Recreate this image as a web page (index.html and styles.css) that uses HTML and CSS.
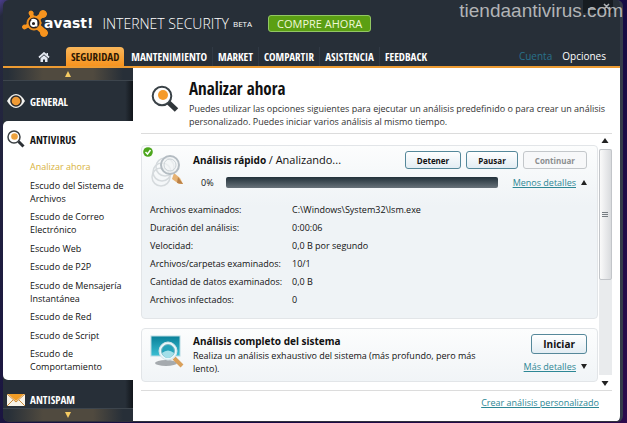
FILE: index.html
```
<!DOCTYPE html>
<html lang="es">
<head>
<meta charset="UTF-8">
<meta name="viewport" content="width=device-width, initial-scale=1.0">
<title>avast! Internet Security</title>
<link rel="stylesheet" href="styles.css">
</head>
<body>
  <div class="window">
    <header>
      <div class="brand">
        <svg class="brand-icon" width="30" height="30" viewBox="0 0 30 30">
          <g fill="#f7941e" stroke="#f7941e" stroke-linecap="round">
            <circle cx="13" cy="14" r="7"/>
            <path d="M13 14 L10 4" stroke-width="4"/>
            <circle cx="10" cy="4" r="2"/>
            <path d="M14 12 L22 5" stroke-width="5"/>
            <circle cx="22" cy="5" r="3.500"/>
            <path d="M13 14 L4 18" stroke-width="4"/>
            <circle cx="3.500" cy="18" r="2"/>
            <path d="M15 16 L23 23" stroke-width="6"/>
            <circle cx="23" cy="24" r="3.500"/>
          </g>
          <circle cx="13" cy="14" r="5.500" fill="#2a2220"/>
          <circle cx="12.500" cy="14.500" r="2.500" fill="none" stroke="#fff" stroke-width="1.800"/>
          <path d="M10.500 11 Q15.500 10 15.500 13 V17.500" fill="none" stroke="#fff" stroke-width="1.800"/>
        </svg>
        <span class="brand-name">avast!</span>
        <span class="product">INTERNET SECURITY</span>
        <span class="beta">BETA</span>
        <button type="button" class="buy">COMPRE AHORA</button>
      </div>
      <div class="window-controls">
        <svg width="30" height="13" viewBox="0 0 30 13">
          <path d="M5 9 H11 M21 4 L26 9 M26 4 L21 9" fill="none" stroke="#aeb2b5" stroke-width="1.500"/>
        </svg>
      </div>
      <nav>
        <a href="#" class="home" aria-label="Inicio">
          <svg width="12" height="10" viewBox="0 0 12 10">
            <path d="M1 5.500 L6 1 L11 5.500" fill="none" stroke="#e4e9f2" stroke-width="1.700"/>
            <path d="M8.500 1 H10 V4 L8.500 2.800 Z M2.500 6.200 L6 3.200 L9.500 6.200 V10 H7 V7.500 H5 V10 H2.500 Z" fill="#e4e9f2"/>
          </svg>
        </a>
        <a href="#" class="tab active">SEGURIDAD</a>
        <a href="#" class="tab">MANTENIMIENTO</a>
        <a href="#" class="tab">MARKET</a>
        <a href="#" class="tab">COMPARTIR</a>
        <a href="#" class="tab">ASISTENCIA</a>
        <a href="#" class="tab">FEEDBACK</a>
        <a href="#" class="account">Cuenta</a>
        <a href="#" class="options">Opciones</a>
      </nav>
    </header>

    <div class="content">
      <aside>
        <button type="button" class="scroll-strip" aria-label="Subir">
          <svg width="8" height="6" viewBox="0 0 8 6"><path d="M4 0 L7 6 H1 Z" fill="#f6cb62"/></svg>
        </button>
        <a href="#" class="section general">
          <svg width="18" height="14" viewBox="0 0 18 14">
            <path d="M0 7 Q4 0 9 0 Q14 0 18 7 Q14 14 9 14 Q4 14 0 7 Z" fill="#f3f3f0"/>
            <circle cx="9" cy="7" r="5.800" fill="#2c2a2a"/>
            <circle cx="9" cy="7" r="4.300" fill="#f09a35"/>
          </svg>
          GENERAL
        </a>
        <div class="section-open">
          <a href="#" class="section antivirus">
            <svg width="18" height="18" viewBox="0 0 18 18">
              <path d="M11.500 11.500 L16.500 16.500" stroke="#2b3035" stroke-width="3"/>
              <circle cx="7" cy="7" r="6" fill="#fff" stroke="#3c4044" stroke-width="1.500"/>
              <circle cx="7.500" cy="6.500" r="3.300" fill="#eda23e"/>
            </svg>
            ANTIVIRUS
          </a>
          <ul>
            <li><a href="#" class="current">Analizar ahora</a></li>
            <li><a href="#">Escudo del Sistema de Archivos</a></li>
            <li><a href="#">Escudo de Correo Electrónico</a></li>
            <li><a href="#">Escudo Web</a></li>
            <li><a href="#">Escudo de P2P</a></li>
            <li><a href="#">Escudo de Mensajería Instantánea</a></li>
            <li><a href="#">Escudo de Red</a></li>
            <li><a href="#">Escudo de Script</a></li>
            <li><a href="#">Escudo de Comportamiento</a></li>
          </ul>
        </div>
        <a href="#" class="section antispam">
          <svg width="18" height="12" viewBox="0 0 18 12">
            <rect width="18" height="12" fill="#f7f3e8"/>
            <path d="M1 0 H17 L9 7 Z" fill="#f09c26"/>
            <path d="M0 0 L9 8 L18 0 M0 12 L6 6 M18 12 L12 6" fill="none" stroke="#c98a3a" stroke-width="1"/>
          </svg>
          ANTISPAM
        </a>
        <button type="button" class="scroll-strip down" aria-label="Bajar">
          <svg width="8" height="6" viewBox="0 0 8 6"><path d="M4 6 L7 0 H1 Z" fill="#f6cb62"/></svg>
        </button>
      </aside>

      <main>
        <div class="intro">
          <svg width="28" height="28" viewBox="0 0 28 28">
            <path d="M17 17 L25.500 25" stroke="#30363a" stroke-width="5"/>
            <circle cx="11" cy="11" r="9.300" fill="#fdfdfd" stroke="#3a4247" stroke-width="2"/>
            <circle cx="12" cy="10" r="5" fill="#f59a28"/>
          </svg>
          <div>
            <h1>Analizar ahora</h1>
            <p>Puedes utilizar las opciones siguientes para ejecutar un análisis predefinido o para crear un análisis personalizado. Puedes iniciar varios análisis al mismo tiempo.</p>
          </div>
        </div>

        <div class="scans">
          <div class="cards">
            <section class="card running">
              <svg class="check" width="10" height="10" viewBox="0 0 10 10">
                <circle cx="5" cy="5" r="4.800" fill="#4ca61c"/>
                <path d="M2.500 5 L4.500 7 L7.500 3" fill="none" stroke="#fff" stroke-width="1.500"/>
              </svg>
              <div class="card-top">
                <svg class="scan-icon" width="34" height="34" viewBox="0 0 34 34">
                  <g fill="none" stroke="#d5dadd" stroke-width="1.500">
                    <circle cx="11" cy="23" r="9"/>
                    <circle cx="12" cy="18" r="9"/>
                    <circle cx="15" cy="13" r="9"/>
                  </g>
                  <path d="M24 19 L22 25 L29 30 L33 30 L30 24 Z" fill="#e6b273"/>
                  <path d="M28 23 L33 30 L27 29 Z" fill="#b98148"/>
                  <circle cx="20" cy="11" r="9" fill="#f1f4f5" fill-opacity=".7" stroke="#b4bcc2" stroke-width="2"/>
                  <circle cx="20" cy="11" r="6" fill="none" stroke="#cbd2d6" stroke-width="1"/>
                </svg>
                <div class="card-body">
                  <div class="row">
                    <h2>Análisis rápido <span>/ Analizando...</span></h2>
                    <div class="buttons">
                      <button type="button">Detener</button>
                      <button type="button">Pausar</button>
                      <button type="button" disabled>Continuar</button>
                    </div>
                  </div>
                  <div class="row progress-row">
                    <span class="percent">0%</span>
                    <div class="progress" role="progressbar" aria-valuenow="0" aria-label="Progreso"></div>
                    <a href="#" class="details">Menos detalles</a>
                    <svg width="6" height="5" viewBox="0 0 6 5"><path d="M3 0 L6 5 H0 Z" fill="#222"/></svg>
                  </div>
                </div>
              </div>
              <dl>
                <dt>Archivos examinados:</dt><dd>C:\Windows\System32\lsm.exe</dd>
                <dt>Duración del análisis:</dt><dd>0:00:06</dd>
                <dt>Velocidad:</dt><dd>0,0 B por segundo</dd>
                <dt>Archivos/carpetas examinados:</dt><dd>10/1</dd>
                <dt>Cantidad de datos examinados:</dt><dd>0,0 B</dd>
                <dt>Archivos infectados:</dt><dd>0</dd>
              </dl>
            </section>

            <section class="card full">
              <svg class="scan-icon" width="34" height="34" viewBox="0 0 34 34">
                <defs>
                  <linearGradient id="screen" x1="0" y1="0" x2="0" y2="1">
                    <stop offset="0" stop-color="#087f98"/>
                    <stop offset="1" stop-color="#3cc0d4"/>
                  </linearGradient>
                </defs>
                <ellipse cx="16" cy="28" rx="11" ry="3" fill="#a5aaae"/>
                <rect x="1" y="1" width="29" height="20" fill="url(#screen)" stroke="#b9dce4"/>
                <path d="M24 23 L32 31" stroke="#d9a05b" stroke-width="4"/>
                <circle cx="18" cy="16" r="9" fill="#e9f7fa" stroke="#d3e3e8" stroke-width="1"/>
                <circle cx="18" cy="16" r="6.500" fill="#25a3b9" stroke="#7fb6c2"/>
                <path d="M12 18 Q18 13 24 18 Q22 23 18 23 Q14 23 12 18" fill="#a2dfe9"/>
              </svg>
              <div class="card-text">
                <h2>Análisis completo del sistema</h2>
                <p>Realiza un análisis exhaustivo del sistema (más profundo, pero más lento).</p>
              </div>
              <div class="card-side">
                <button type="button" class="start">Iniciar</button>
                <div class="more">
                  <a href="#" class="details">Más detalles</a>
                  <svg width="6" height="5" viewBox="0 0 6 5"><path d="M3 5 L6 0 H0 Z" fill="#222"/></svg>
                </div>
              </div>
            </section>
          </div>

          <div class="scrollbar">
            <svg width="8" height="5" viewBox="0 0 8 5"><path d="M4 0 L7.500 5 H0.500 Z" fill="#222"/></svg>
            <div class="track">
              <div class="thumb"><i></i><i></i><i></i></div>
            </div>
            <svg width="8" height="5" viewBox="0 0 8 5"><path d="M4 5 L7.500 0 H0.500 Z" fill="#222"/></svg>
          </div>
        </div>

        <footer>
          <a href="#">Crear análisis personalizado</a>
        </footer>
      </main>
    </div>
  </div>
  <div class="watermark">tiendaantivirus.com</div>
</body>
</html>
```
FILE: styles.css
```
* {
  box-sizing: border-box;
}

body {
  margin: 0;
  padding: 0 4px 1px 3px;
  min-height: 100vh;
  display: flex;
  position: relative;
  font-family: "Open Sans", "Noto Sans", sans-serif;
  font-size: 9px;
  line-height: 13px;
  color: #111;
  background: linear-gradient(135deg, #4b3d8c 0, #252a3d 12px, #150a43 60%, #2c0a4c 100%);
}

h1, h2, p, ul, dl, dd {
  margin: 0;
  padding: 0;
}

button {
  font-family: inherit;
  cursor: pointer;
}

svg {
  flex: none;
  display: block;
}

.window {
  flex: 1;
  display: flex;
  flex-direction: column;
  border-right: 3px solid #343a49;
  border-bottom: 1px solid #30313b;
  border-radius: 6px;
  background: #272f38;
  overflow: hidden;
  position: relative;
}

header {
  border-bottom: 2px solid #ed9b32;
}

.brand {
  display: flex;
  align-items: center;
  height: 47px;
  padding-left: 18px;
  color: #fff;
}

.brand-name {
  font-family: "DejaVu Sans", sans-serif;
  font-weight: bold;
  font-size: 14px;
  margin-left: -7px;
}

.product {
  font-size: 14px;
  font-weight: 300;
  margin-left: 9px;
}

.beta {
  font-size: 8px;
  margin-left: 4px;
}

.buy {
  margin-left: 16px;
  padding: 0 8px;
  height: 17px;
  border: 1px solid #92c763;
  border-radius: 3px;
  background: #5b9f13;
  color: #f0f8d8;
  font-size: 11px;
  line-height: 15px;
}

.window-controls {
  position: absolute;
  top: 0;
  right: 7px;
  background: #171c21;
}

.watermark {
  position: absolute;
  top: 0;
  right: 4px;
  font-family: "Liberation Sans", Arial, sans-serif;
  font-size: 19px;
  line-height: 21px;
  color: #b2b4b6;
}

nav {
  display: flex;
  height: 19px;
  align-items: center;
  font-size: 10px;
  line-height: 19px;
}

nav a {
  color: #fff;
  text-decoration: none;
}

.home {
  width: 63px;
  padding-left: 35px;
}

.tab {
  font-family: "Open Sans Condensed", "Liberation Sans Narrow", "Open Sans", sans-serif;
  font-size: 11px;
  font-weight: bold;
  padding: 0 5px;
  border-right: 1px solid #303944;
}

.tab.active {
  color: #2c1703;
  background: linear-gradient(#f9b75b, #f7931e);
  border: 0;
  border-radius: 4px 4px 0 0;
}

.tab.active + .tab {
  margin-left: 2px;
}

.tab:nth-child(7) {
  border: 0;
}

.account {
  margin-left: auto;
}

nav .account {
  color: #29718c;
}

.options {
  margin: 0 14px 0 10px;
}

.content {
  flex: 1;
  display: flex;
}

aside {
  width: 130px;
  flex: none;
  display: flex;
  flex-direction: column;
  background: linear-gradient(90deg, #272f38 94%, #11151a);
}

.scroll-strip {
  height: 13px;
  padding: 0;
  border: 0;
  border-bottom: 1px solid #3d454d;
  display: flex;
  align-items: center;
  justify-content: center;
  background: linear-gradient(90deg, #272f38 5px, #504a3f 40px, #504a3f 90px, #272f38 120px);
}

.scroll-strip.down {
  border-top: 1px solid #3d454d;
  border-bottom: 0;
}

.section {
  display: flex;
  align-items: center;
  gap: 5px;
  height: 40px;
  padding-left: 4px;
  font-family: "Open Sans Condensed", "Liberation Sans Narrow", "Open Sans", sans-serif;
  font-size: 11px;
  font-weight: bold;
  color: #fff;
  text-decoration: none;
}

.section-open {
  flex: 1;
  display: flex;
  flex-direction: column;
  background: #fff;
  border-radius: 5px 0 0 5px;
}

.antivirus {
  height: 36px;
  color: #111;
}

.antispam {
  height: 28px;
  padding-top: 11px;
}

aside ul {
  flex: 1;
  display: flex;
  flex-direction: column;
  justify-content: space-between;
  list-style: none;
  padding: 3px 4px 7px 27px;
}

aside li a {
  color: #111;
  text-decoration: none;
}

aside li a.current {
  color: #d8b23c;
}

main {
  flex: 1;
  display: flex;
  flex-direction: column;
  padding: 0 8px;
  background: #fff;
}

.intro {
  display: flex;
  gap: 10px;
  padding: 8px 0 5px 10px;
  border-bottom: 1px solid #dcdcdc;
  color: #333;
}

.intro svg {
  margin-top: 9px;
}

h1 {
  font-family: "Open Sans Condensed", "Liberation Sans Narrow", "Open Sans", sans-serif;
  font-size: 17px;
  line-height: 26px;
  color: #111;
}

.scans {
  flex: 1;
  display: flex;
  padding-bottom: 4px;
  border-bottom: 1px solid #dcdcdc;
}

.cards {
  flex: 1;
  display: flex;
  flex-direction: column;
  gap: 9px;
  padding: 11px 0 4px;
}

.card {
  border: 1px solid #e2e5e8;
  border-radius: 4px;
  background: linear-gradient(#fcfdfd, #eff3f6 60px);
}

.running {
  flex: 1;
  position: relative;
}

.check {
  position: absolute;
  top: 1px;
  left: 1px;
}

.card-top {
  display: flex;
  gap: 9px;
  padding: 5px 10px 0 8px;
}

.scan-icon {
  margin-top: 3px;
}

.card-body {
  flex: 1;
}

.row {
  display: flex;
  align-items: center;
  justify-content: space-between;
}

h2 {
  font-family: "Noto Sans", "Open Sans", sans-serif;
  font-size: 10px;
  line-height: 15px;
  color: #111;
}

h2 span {
  font-family: "Open Sans", sans-serif;
  font-size: 11px;
  font-weight: normal;
}

.buttons {
  display: flex;
  gap: 5px;
}

.card button {
  height: 18px;
  padding: 0 11px;
  border: 1px solid #55889a;
  border-radius: 3px;
  background: linear-gradient(#fff, #e3edf3);
  font-size: 8px;
  font-weight: bold;
  color: #111;
}

.card button:disabled {
  border-color: #c3c7ca;
  background: #f7f8f9;
  color: #8b8e90;
}

.progress-row {
  gap: 5px;
  height: 27px;
}

.percent {
  width: 28px;
  padding-left: 8px;
}

.progress {
  flex: 1;
  height: 11px;
  margin-right: 10px;
  border-radius: 2px;
  background: linear-gradient(#22313a, #68727a);
}

.details, footer a {
  color: #2d8795;
}

dl {
  display: grid;
  grid-template-columns: 142px 1fr;
  row-gap: 5px;
  padding: 7px 8px 10px;
}

.card.full {
  display: flex;
  gap: 9px;
  padding: 3px 10px 3px 8px;
}

.card-text {
  flex: 1;
  padding: 2px 30px 3px 0;
}

.card-side {
  display: flex;
  flex-direction: column;
  align-items: flex-end;
  gap: 6px;
  padding-top: 2px;
}

.card .start {
  height: 20px;
  font-size: 10px;
}

.more {
  display: flex;
  align-items: center;
  gap: 5px;
}

.scrollbar {
  width: 14px;
  display: flex;
  flex-direction: column;
  align-items: center;
  gap: 6px;
  padding-top: 4px;
}

.track {
  flex: 1;
  width: 13px;
  background: #e9ebed;
}

.thumb {
  height: 58%;
  display: flex;
  flex-direction: column;
  align-items: center;
  justify-content: center;
  gap: 1px;
  border: 1px solid #c2c5c9;
  border-radius: 2px;
  background: linear-gradient(90deg, #fafafa, #d9dbde);
}

.thumb i {
  width: 6px;
  height: 1px;
  background: #777d82;
}

footer {
  padding: 5px 13px 12px 0;
  text-align: right;
}
```
